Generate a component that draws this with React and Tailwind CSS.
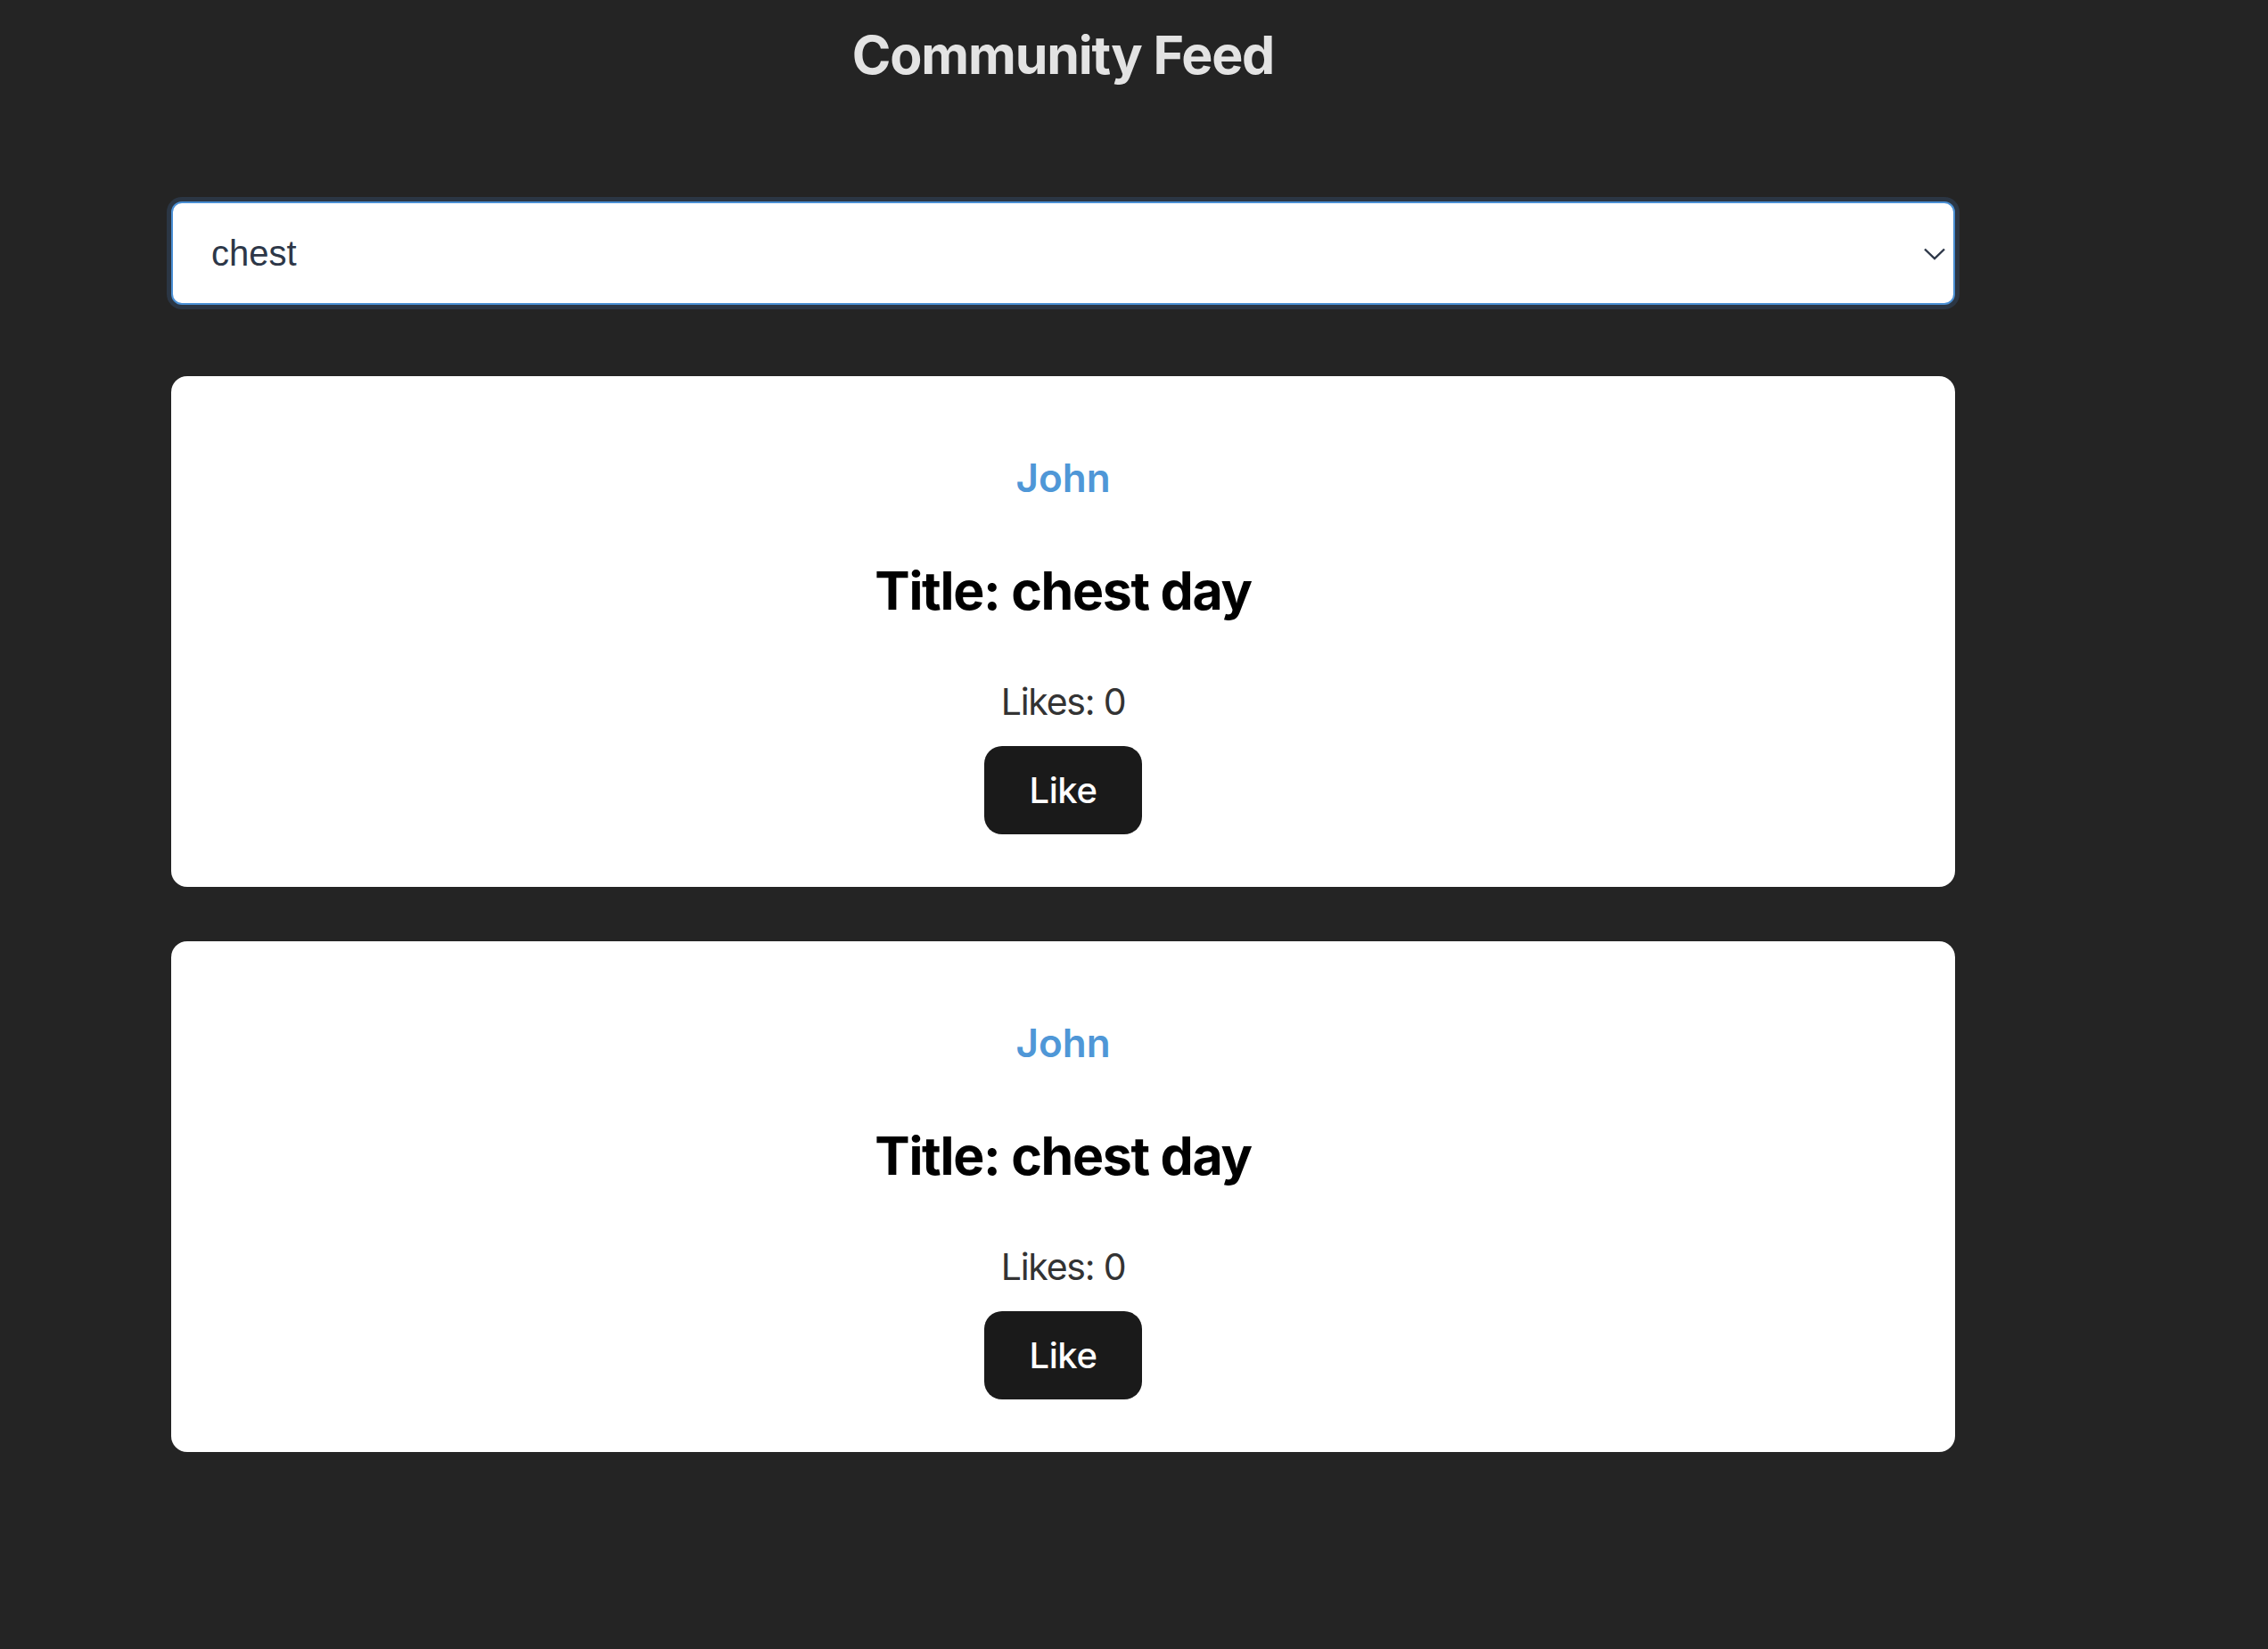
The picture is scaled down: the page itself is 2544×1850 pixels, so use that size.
import { useState } from "react";

const posts = [
  { id: 1, author: "John", title: "chest day", likes: 0 },
  { id: 2, author: "John", title: "chest day", likes: 0 },
];

function PostCard({ post }) {
  return (
    <div className="bg-white rounded-[18px] h-[573px] pt-[92px] flex flex-col items-center">
      <h3 className="text-[44px] leading-none font-semibold text-[#4f97d7]">{post.author}</h3>
      <h2 className="mt-[75px] text-[59px] leading-none font-bold tracking-[-0.022em] text-black">Title: {post.title}</h2>
      <p className="mt-[75px] text-[41px] leading-none tracking-[-0.03em] text-[#333333]">Likes: {post.likes}</p>
      <button className="mt-[29px] w-[177px] h-[99px] rounded-[20px] bg-[#1a1a1a] text-white text-[40px] font-medium leading-none tracking-[-0.01em]">
        Like
      </button>
    </div>
  );
}

export default function App() {
  const [filter, setFilter] = useState("chest");

  return (
    <div className="min-h-screen bg-[#242424] font-['Inter',sans-serif]">
      <div className="ml-[192px] w-[2001px] pt-[32px] pb-[100px]">
        <h1 className="text-center text-[59px] leading-none font-bold tracking-[-0.02em] text-[#e3e3e3]">Community Feed</h1>

        <div className="relative mt-[135px]">
          <select
            value={filter}
            onChange={(e) => setFilter(e.target.value)}
            className="appearance-none w-full h-[116px] pl-[43px] bg-white border-2 border-[#4a8fd4] rounded-[12px] ring-[5px] ring-[#2b3644] outline-none text-[40px] text-[#2d3748] font-['Liberation_Sans',Arial,sans-serif]"
          >
            <option value="chest">chest</option>
            <option value="back">back</option>
            <option value="legs">legs</option>
          </select>
          <svg
            className="absolute right-[11px] top-[52px] pointer-events-none"
            width="24"
            height="14"
            viewBox="0 0 24 14"
            fill="none"
          >
            <path d="M1 1.5 L12 12 L23 1.5" stroke="#2d3748" strokeWidth="2.4" />
          </svg>
        </div>

        <div className="mt-[80px] flex flex-col gap-[61px]">
          {posts.map((p) => (
            <PostCard key={p.id} post={p} />
          ))}
        </div>
      </div>
    </div>
  );
}
